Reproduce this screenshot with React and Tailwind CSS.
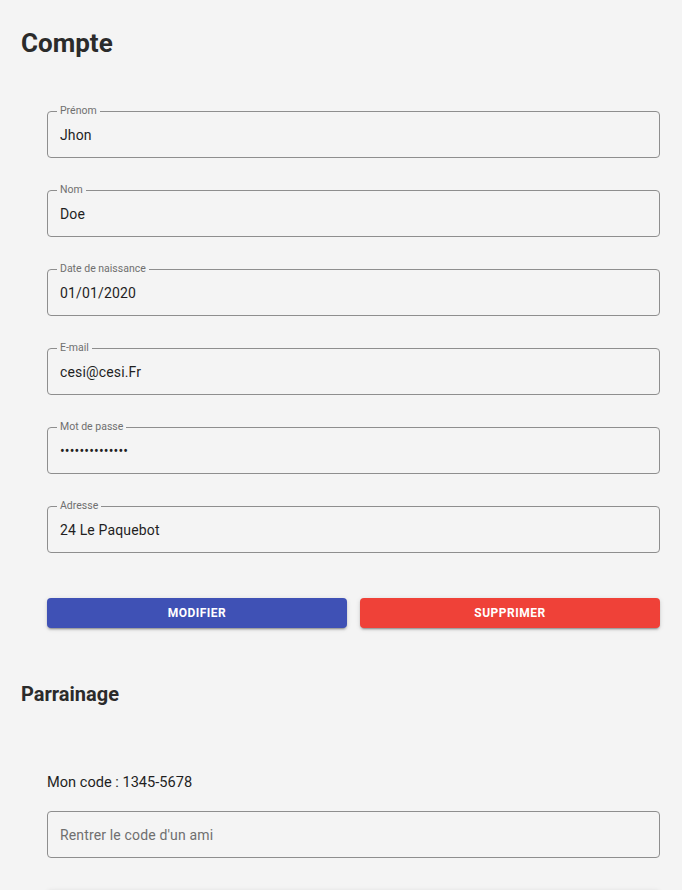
const FIELDS = [
  { label: 'Prénom', value: 'Jhon' },
  { label: 'Nom', value: 'Doe' },
  { label: 'Date de naissance', value: '01/01/2020' },
  { label: 'E-mail', value: 'cesi@cesi.Fr' },
  { label: 'Mot de passe', value: 'motdepasse1234', type: 'password' },
  { label: 'Adresse', value: '24 Le Paquebot' },
];

const raised =
  'shadow-[0_3px_1px_-2px_rgba(0,0,0,0.2),0_2px_2px_0_rgba(0,0,0,0.14),0_1px_5px_0_rgba(0,0,0,0.12)]';

// Outlined field with the label sitting in the top border
function Field({ label, value, type = 'text' }) {
  return (
    <div className="relative h-[47px] rounded-[4px] border border-[#8e8e8e]">
      <span className="absolute left-[9px] top-[-8px] bg-[#f4f4f4] px-[3px] text-[10.5px] leading-[14px] text-[#6f6f6f]">
        {label}
      </span>
      <input
        type={type}
        readOnly
        defaultValue={value}
        className="h-full w-full bg-transparent px-[12px] text-[14px] tracking-[0.15px] text-[#1f1f1f] outline-none"
      />
    </div>
  );
}

export default function App() {
  return (
    <div className="min-h-screen bg-[#f4f4f4] pb-[40px] font-['Roboto',sans-serif]">
      <div className="pl-[21px]">
        <h1 className="pt-[27px] text-[26px] font-bold leading-[32px] text-[#2b2b2b]">Compte</h1>
      </div>

      <div className="ml-[47px] mt-[52px] w-[613px]">
        <div className="flex flex-col gap-[32px]">
          {FIELDS.map((f) => (
            <Field key={f.label} {...f} />
          ))}
        </div>

        <div className="mt-[45px] flex gap-[13px]">
          <button
            className={`h-[30px] flex-1 rounded-[4px] bg-[#3f51b5] text-[12px] font-bold tracking-[0.5px] text-white ${raised}`}
          >
            MODIFIER
          </button>
          <button
            className={`h-[30px] flex-1 rounded-[4px] bg-[#ef4138] text-[12px] font-bold tracking-[0.5px] text-white ${raised}`}
          >
            SUPPRIMER
          </button>
        </div>
      </div>

      <div className="pl-[21px]">
        <h2 className="mt-[54px] text-[20px] font-bold leading-[24px] text-[#2b2b2b]">Parrainage</h2>
      </div>

      <div className="ml-[47px] w-[613px]">
        <p className="mt-[66px] text-[14.6px] leading-[20px] text-[#1f1f1f]">Mon code : 1345-5678</p>
        <div className="mt-[19px] h-[47px] rounded-[4px] border border-[#8e8e8e]">
          <input
            type="text"
            placeholder="Rentrer le code d'un ami"
            className="h-full w-full bg-transparent px-[12px] text-[14px] tracking-[0.15px] text-[#1f1f1f] outline-none placeholder:text-[#6f6f6f]"
          />
        </div>
        <div className={`mt-[32px] h-[30px] w-full rounded-[4px] bg-[#f4f4f4] ${raised}`} />
      </div>
    </div>
  );
}
